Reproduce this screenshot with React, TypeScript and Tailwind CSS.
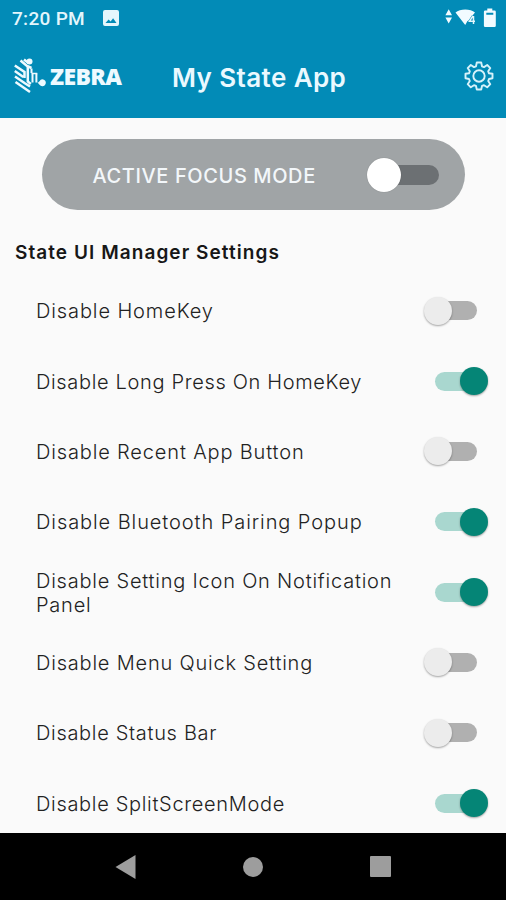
import { useState } from "react";
import clsx from "clsx";

const SETTINGS = [
  { label: "Disable HomeKey", on: false, tracking: "tracking-[0.89px]" },
  { label: "Disable Long Press On HomeKey", on: true, tracking: "tracking-[0.66px]" },
  { label: "Disable Recent App Button", on: false, tracking: "tracking-[0.85px]" },
  { label: "Disable Bluetooth Pairing Popup", on: true, tracking: "tracking-[0.92px]" },
  { label: "Disable Setting Icon On Notification Panel", on: true, tracking: "tracking-[0.78px]" },
  { label: "Disable Menu Quick Setting", on: false, tracking: "tracking-[0.8px]" },
  { label: "Disable Status Bar", on: false, tracking: "tracking-[0.68px]" },
  { label: "Disable SplitScreenMode", on: true, tracking: "tracking-[0.68px]" },
];

function StatusBar() {
  return (
    <div className="flex h-9 items-center pl-3 pr-[10px] font-[Roboto,sans-serif] text-[#e4f6fc]">
      <span className="w-[91px] whitespace-nowrap text-[19px] leading-none font-medium tracking-[0.3px]">7:20 PM</span>
      <svg width="16" height="16" viewBox="0 0 16 16" className="shrink-0">
        <path
          fill="currentColor"
          fillRule="evenodd"
          d="M2 0h12a2 2 0 0 1 2 2v12a2 2 0 0 1-2 2H2a2 2 0 0 1-2-2V2a2 2 0 0 1 2-2ZM2.5 13h11l-3.4-4.7-2.5 3.2-2-2Z"
        />
      </svg>
      <svg width="52" height="20" viewBox="0 0 52 20" className="ml-auto" fill="#f2fbff">
        <path d="M4.7 1.300 8 7.200H1.400ZM4.700 15.500 8 9.600H1.400Z" />
        <path d="M11.500 4.500C16 .5 26.500.5 31 4.500L28.500 7.500V12l-5 1-2.300 4Z" />
        <path d="M29.500 8v8M29 8l-3.500 5.200h5.500" fill="none" stroke="#028bb7" strokeWidth="2.400" />
        <path d="M29.500 8v8M29 8l-3.500 5.200h5.500" fill="none" stroke="#e4f6fc" strokeWidth="1.500" />
        <path
          fillRule="evenodd"
          d="M43.300.5h5v2h2.200a1.300 1.300 0 0 1 1.300 1.300v14a1.300 1.300 0 0 1-1.300 1.300h-9.300a1.300 1.300 0 0 1-1.300-1.300v-14a1.300 1.300 0 0 1 1.300-1.300h2.100ZM42.300 4.800v2h7v-2Z"
        />
      </svg>
    </div>
  );
}

function ZebraLogo() {
  return (
    <div className="flex h-10 w-[111px] items-center text-[#eefaff]">
      <svg width="34" height="36" viewBox="0 0 34 36" className="shrink-0" fill="none" stroke="currentColor">
        <path d="M7.500 2.500 14 8l4.500 2M1.800 7.500 11.500 14v6M1.800 13l8.500 6M2 18.500l9.500 6.500 5.500 3.500M2.500 24 17 34" strokeWidth="2.500" />
        <path d="M11 1.500 15.500 5M14.800 9v14.500l3 2.500" strokeWidth="2.500" />
        <path d="M18.500 10.500V15M19.500 15.500v9M23.400 15.500v9" strokeWidth="2" />
        <path d="M18.500 15.500h5.800" strokeWidth="1.500" />
        <circle cx="16.500" cy="3.500" r="3" fill="currentColor" stroke="none" />
        <path d="M24.500 24.500c2 0 2.500-3.300 4.700-3.300a3.500 3.500 0 1 1-2.700 5.600Z" fill="currentColor" stroke="none" />
      </svg>
      <span className="ml-[3px] font-['Open_Sans',sans-serif] text-[23px] leading-none font-extrabold tracking-[-0.6px]">ZEBRA</span>
    </div>
  );
}

function GearIcon() {
  return (
    <svg width="30" height="30" viewBox="0 0 30 30" fill="none" stroke="#d7f2fa" strokeWidth="1.900" strokeLinejoin="round">
      <path d="M12.800 1.500h4.400l.8 3.800 2 .8 3.200-2.100 3.100 3.100-2.100 3.200.8 2 3.500.5v4.400l-3.500.8-.8 2 2.100 3.200-3.100 3.100-3.200-2.100-2 .8-.8 3.500h-4.400l-.8-3.500-2-.8-3.200 2.100-3.100-3.100L5.800 20l-.8-2-3.500-.8v-4.400l3.500-.5.8-2-2.100-3.200L6.800 4 10 6.100l2-.8Z" />
      <circle cx="15" cy="15" r="5.700" />
    </svg>
  );
}

function Toggle({ on, label, onClick }: { on: boolean; label: string; onClick: () => void }) {
  return (
    <button
      role="switch"
      aria-checked={on}
      aria-label={label}
      onClick={onClick}
      className="relative flex h-8 w-16 shrink-0 items-center justify-center"
    >
      <span className={clsx("h-[19px] w-[42px] rounded-full", on ? "bg-[#a9d7cf]" : "bg-[#b0b0b0]")} />
      <span
        className={clsx(
          "absolute top-[2px] size-7 rounded-full shadow-[0_1px_2px_rgba(0,0,0,0.35)]",
          on ? "right-0 bg-[#058576]" : "left-0 bg-[#ececec]"
        )}
      />
    </button>
  );
}

function FocusMode() {
  const [on, setOn] = useState(false);

  return (
    <div className="mx-auto mt-[21px] flex h-[71px] w-[423px] items-center justify-between rounded-full bg-[#a0a4a6] pl-[51px] pr-[26px]">
      <span className="mt-[2px] whitespace-nowrap text-[20px] font-medium tracking-[0.6px] text-[#f3f7fa]">ACTIVE FOCUS MODE</span>
      <button
        role="switch"
        aria-checked={on}
        aria-label="Active focus mode"
        onClick={() => setOn((v) => !v)}
        className="relative flex h-9 w-[73px] items-center justify-end"
      >
        <span className="h-5 w-[60px] rounded-full bg-[#6c7073]" />
        <span
          className={clsx(
            "absolute top-[1px] size-[34px] rounded-full bg-white shadow-[0_0_1px_rgba(0,0,0,0.3)]",
            on ? "right-0" : "left-[1px]"
          )}
        />
      </button>
    </div>
  );
}

export default function App() {
  const [settings, setSettings] = useState(SETTINGS);

  function toggle(index: number) {
    setSettings((list) => list.map((s, i) => (i === index ? { ...s, on: !s.on } : s)));
  }

  return (
    <div className="flex h-[900px] w-[506px] flex-col overflow-hidden bg-[#fafafa] font-[Inter,sans-serif]">
      <header className="h-[118px] shrink-0 bg-[#028bb7]">
        <StatusBar />
        <div className="flex h-20 items-center pl-[13px] pr-[12px]">
          <ZebraLogo />
          <h1 className="ml-[48px] mt-[2px] whitespace-nowrap text-[26px] font-semibold tracking-[0.4px] text-[#eaf9ff]">My State App</h1>
          <div className="ml-auto">
            <GearIcon />
          </div>
        </div>
      </header>

      <main className="flex-1 overflow-hidden">
        <FocusMode />
        <h2 className="mt-[29px] pl-[15px] text-[19px] leading-7 font-semibold tracking-[1.06px] text-[#171717]">
          State UI Manager Settings
        </h2>
        <ul className="mt-[8.5px]">
          {settings.map((s, i) => (
            <li key={s.label} className="flex h-[70.35px] items-center justify-between pl-9 pr-[18px]">
              <span className={clsx("mt-px w-[375px] text-[20px] leading-6 font-light text-[#222]", s.tracking)}>{s.label}</span>
              <Toggle on={s.on} label={s.label} onClick={() => toggle(i)} />
            </li>
          ))}
        </ul>
      </main>

      <nav className="flex h-[67px] shrink-0 items-center justify-between bg-black pl-[115px] pr-[115px]">
        <button aria-label="Back">
          <svg width="21" height="24" viewBox="0 0 21 24">
            <path d="M20.500 0v24L.5 12Z" fill="#9d9d9d" />
          </svg>
        </button>
        <button aria-label="Home" className="size-5 rounded-full bg-[#9d9d9d]" />
        <button aria-label="Recents" className="size-[21px] rounded-[1px] bg-[#9d9d9d]" />
      </nav>
    </div>
  );
}
